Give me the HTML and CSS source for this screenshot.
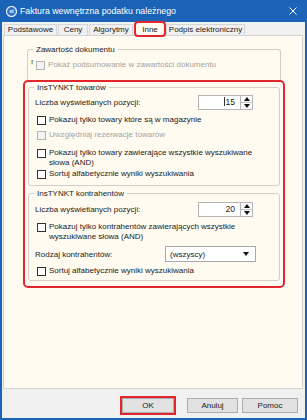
FILE: index.html
```html
<!DOCTYPE html>
<html lang="pl">
<head>
  <meta charset="UTF-8" />
  <title>Faktura wewnętrzna podatku należnego</title>
  <link rel="stylesheet" href="styles.css">
</head>
<body>
  <div class="window">
    <div class="titlebar">
      <svg class="app-icon" width="11" height="11" viewBox="0 0 11 11">
        <circle cx="5.5" cy="5.5" r="5" fill="#2f72c4" stroke="#e6eef8" stroke-width="1.2"/>
        <text x="5.5" y="7.3" font-size="5" font-family="Liberation Sans" font-weight="bold" fill="#fff" text-anchor="middle">st</text>
      </svg>
      <span class="title">Faktura wewnętrzna podatku należnego</span>
      <svg class="close" width="8" height="8" viewBox="0 0 8 8">
        <path d="M0.5 0.5 L7.5 7.5 M7.5 0.5 L0.5 7.5" stroke="#fff" stroke-width="1"/>
      </svg>
    </div>

    <div class="tabs">
      <div class="tab tab-podst">Podstawowe</div>
      <div class="tab tab-ceny">Ceny</div>
      <div class="tab tab-alg">Algorytmy</div>
      <div class="tab tab-inne active">Inne</div>
      <div class="tab tab-podpis">Podpis elektroniczny</div>
    </div>

    <div class="panel">
      <fieldset class="group group-doc">
        <legend>Zawartość dokumentu</legend>
        <div class="check-row doc-row disabled">
          <span class="badge">!</span>
          <span class="box"></span>
          <span>Pokaż podsumowanie w zawartości dokumentu</span>
        </div>
      </fieldset>

      <div class="highlight">
        <fieldset class="group group-goods">
          <legend>InsTYNKT towarów</legend>
          <div class="field-row">
            <span>Liczba wyświetlanych pozycji:</span>
            <div class="spinner">
              <div class="spin-input"><span class="caret"></span>15</div>
              <div class="spin-arrows"><span class="up"></span><span class="down"></span></div>
            </div>
          </div>
          <div class="check-row r1"><span class="box"></span><span>Pokazuj tylko towary które są w magazynie</span></div>
          <div class="check-row r2 disabled"><span class="box"></span><span>Uwzględniaj rezerwacje towarów</span></div>
          <div class="check-row r3"><span class="box"></span><span>Pokazuj tylko towary zawierające wszystkie wyszukiwane<br>słowa (AND)</span></div>
          <div class="check-row r4"><span class="box"></span><span>Sortuj alfabetycznie wyniki wyszukiwania</span></div>
        </fieldset>

        <fieldset class="group group-clients">
          <legend>InsTYNKT kontrahentów</legend>
          <div class="field-row">
            <span>Liczba wyświetlanych pozycji:</span>
            <div class="spinner">
              <div class="spin-input">20</div>
              <div class="spin-arrows"><span class="up"></span><span class="down"></span></div>
            </div>
          </div>
          <div class="check-row c1"><span class="box"></span><span>Pokazuj tylko kontrahentów zawierających wszystkie<br>wyszukiwane słowa (AND)</span></div>
          <div class="field-row c2">
            <span>Rodzaj kontrahentów:</span>
            <div class="select"><span>(wszyscy)</span><span class="arrow"></span></div>
          </div>
          <div class="check-row c3"><span class="box"></span><span>Sortuj alfabetycznie wyniki wyszukiwania</span></div>
        </fieldset>
      </div>
    </div>

    <div class="footer">
      <button class="btn btn-ok">OK</button>
      <button class="btn btn-cancel">Anuluj</button>
      <button class="btn btn-help">Pomoc</button>
    </div>
  </div>
</body>
</html>
```

FILE: styles.css
```css
:root {
  --blue: #1b63b7;
  --cream: #fffbf1;
  --face: #f0f0f0;
  --line: #d3cfc6;
  --red: #e3262d;
  --text: #1a1a1a;
  --muted: #a3a3a3;
}

* {
  box-sizing: border-box;
  margin: 0;
  padding: 0;
}

body {
  font-family: "Liberation Sans", Arial, sans-serif;
  font-size: 8px;
  color: var(--text);
}

.window {
  width: 307px;
  height: 420px;
  display: flex;
  flex-direction: column;
  background: var(--face);
  border: 2px solid var(--blue);
  border-top: 0;
}

/* title bar */
.titlebar {
  flex: none;
  height: 22px;
  margin: 0 -2px;
  padding-left: 6px;
  display: flex;
  align-items: center;
  background: var(--blue);
  color: #fff;
  font-size: 8.8px;
}

.app-icon {
  margin-right: 3px;
}

.title {
  flex: 1;
}

.close {
  margin-right: 10px;
}

/* tabs */
.tabs {
  flex: none;
  height: 13px;
  padding-left: 2px;
  display: flex;
  align-items: flex-end;
}

.tab {
  height: 11px;
  line-height: 10px;
  text-align: center;
  border: 1px solid #d6d6d6;
  border-bottom: 0;
  background: #f0f0f0;
  margin-right: 1px;
}

.tab-podst { width: 53px; }
.tab-ceny { width: 30px; }
.tab-alg { width: 44px; margin-right: 2px; }
.tab-inne { width: 30px; }
.tab-podpis { width: 79px; }

.tab.active {
  height: 14px;
  line-height: 13px;
  margin-bottom: -1px;
  position: relative;
  background: var(--cream);
  outline: 2px solid var(--red);
  outline-offset: -1px;
  border-radius: 3px;
}

/* panel */
.panel {
  flex: 1;
  margin: 0 2px 0 1px;
  padding: 8px 17px 0 19px;
  background: var(--cream);
  border: 1px solid #d4d4d4;
}

.group {
  border: 1px solid var(--line);
  border-radius: 3px;
}

.group legend {
  margin-left: 5px;
  padding: 0 3px;
  line-height: 11px;
}

.group-doc {
  margin: 0 4px;
  padding-bottom: 10px;
  border-bottom: 0;
  border-radius: 3px 3px 0 0;
}

.highlight {
  border: 2px solid var(--red);
  border-radius: 5px;
  padding: 0 3px 5px 3px;
}

.group-goods {
  padding-bottom: 6px;
}

.group-clients {
  margin-top: 2px;
  padding-bottom: 4px;
}

/* rows */
.check-row {
  display: flex;
  align-items: flex-start;
  padding-left: 8px;
  line-height: 10px;
}

.box {
  flex: none;
  width: 9px;
  height: 9px;
  margin: 0.5px 3px 0 0;
  border: 1px solid #333;
  background: #fff;
}

.check-row.disabled {
  color: var(--muted);
}

.check-row.disabled .box {
  border-color: #b5b5b5;
  background: #f4f4f4;
}

.doc-row {
  margin-top: 5px;
  padding-left: 2px;
}

.badge {
  flex: none;
  width: 4px;
  height: 5px;
  margin-right: 2px;
  font-size: 5px;
  line-height: 5px;
  font-weight: bold;
  text-align: center;
  color: #222;
  background: #f7f2c8;
}

.r1 { margin-top: 5px; }
.r2 { margin-top: 5px; }
.r3 { margin-top: 8px; }
.r4 { margin-top: 1px; }

.c1 { margin-top: 5px; }
.c2 { margin-top: 4px; }
.c3 { margin-top: 4px; }

.field-row {
  display: flex;
  align-items: center;
  justify-content: space-between;
  padding: 0 26px 0 6px;
}

.group-goods .field-row:first-of-type {
  margin-top: 2px;
}

.group-clients .field-row:first-of-type {
  margin-top: 3px;
}

.c2 {
  padding-right: 23px;
}

/* spinner */
.spinner {
  display: flex;
  height: 15px;
}

.spin-input {
  width: 43px;
  border: 1px solid #b4b4b4;
  background: #fff;
  text-align: right;
  padding-right: 5px;
  line-height: 13px;
  font-size: 8.5px;
}

.caret {
  display: inline-block;
  width: 1px;
  height: 9px;
  margin-right: 1px;
  vertical-align: -1px;
  background: #333;
}

.spin-arrows {
  width: 12px;
  display: flex;
  flex-direction: column;
  border: 1px solid #b4b4b4;
  border-left: 0;
  background: #fdfdfd;
}

.spin-arrows span {
  flex: 1;
  display: flex;
  align-items: center;
  justify-content: center;
}

.spin-arrows .up {
  border-bottom: 1px solid #c4c4c4;
}

.spin-arrows .up::before,
.spin-arrows .down::before {
  content: "";
  border-left: 3.5px solid transparent;
  border-right: 3.5px solid transparent;
}

.spin-arrows .up::before {
  border-bottom: 4px solid #111;
}

.spin-arrows .down::before {
  border-top: 4px solid #111;
}

/* select */
.select {
  width: 91px;
  height: 16px;
  display: flex;
  align-items: center;
  justify-content: space-between;
  padding: 0 6px 0 4px;
  border: 1px solid #a9a9a9;
  background: #fff;
}

.select .arrow {
  border-left: 3.5px solid transparent;
  border-right: 3.5px solid transparent;
  border-top: 4px solid #111;
}

/* footer */
.footer {
  flex: none;
  height: 29px;
  display: flex;
  justify-content: flex-end;
  align-items: flex-start;
  padding: 9px 7px 0 0;
}

.btn {
  height: 15px;
  font-family: inherit;
  font-size: 8px;
  color: var(--text);
  background: #e1e1e1;
  border: 1px solid #adadad;
}

.btn-ok {
  width: 52px;
  margin-right: 13px;
  outline: 2px solid var(--red);
  outline-offset: 0;
}

.btn-cancel {
  width: 51px;
  margin-right: 4px;
}

.btn-help {
  width: 56px;
}
```
